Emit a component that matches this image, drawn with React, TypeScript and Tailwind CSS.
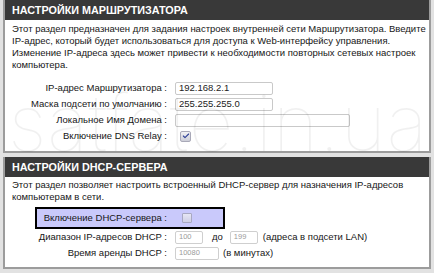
import { Check } from 'lucide-react';

function Header({ title }: { title: string }) {
  return (
    <div className="h-[20px] bg-[#393939] flex items-center pl-[7px]">
      <span className="text-white font-bold text-[10.8px]">{title}</span>
    </div>
  );
}

function TextInput({ value, width }: { value: string; width: string }) {
  return (
    <div className={`${width} h-[13px] bg-white border border-[#c9c9c9] rounded-[2px] flex items-center pl-[3px] text-[9.5px] text-[#222]`}>
      {value}
    </div>
  );
}

function SmallInput({ value, width }: { value: string; width: string }) {
  return (
    <div className={`${width} h-[13px] bg-white border border-[#cfcfcf] rounded-[2px] flex items-center pl-[3px] text-[7.5px] text-[#9a9a9a]`}>
      {value}
    </div>
  );
}

function Checkbox() {
  return (
    <div className="w-[11px] h-[11px] border border-[#a9a9b8] rounded-[2px] bg-gradient-to-b from-[#f2f2f4] to-[#cdced8] flex items-center justify-center">
      <Check size={8} strokeWidth={3.2} className="text-[#2d3f96]" />
    </div>
  );
}

function Row({ label, children }: { label: string; children: React.ReactNode }) {
  return (
    <div className="flex items-center h-[16px]">
      <div className="w-[162px] text-right whitespace-nowrap">{label}</div>
      <div className="ml-[8px] flex items-center">{children}</div>
    </div>
  );
}

export default function App() {
  return (
    <div className="relative w-[434px] h-[273px] bg-[#e2e2e2] px-[3px] overflow-hidden font-['Liberation_Sans',Arial,sans-serif] text-[9.5px] text-[#161616]">
      {/* router settings */}
      <div className="bg-white border-x-2 border-b-2 border-[#9c9c9c]">
        <Header title="НАСТРОЙКИ МАРШРУТИЗАТОРА" />
        <div className="pl-[7px] pt-[3px] leading-[12px] whitespace-nowrap">
          Этот раздел предназначен для задания настроек внутренней сети Маршрутизатора. Введите<br />
          IP-адрес, который будет использоваться для доступа к Web-интерфейсу управления.<br />
          Изменение IP-адреса здесь может привести к необходимости повторных сетевых настроек<br />
          компьютера.
        </div>
        <div className="pt-[9px] pb-[7px] flex flex-col">
          <Row label="IP-адрес Маршрутизатора :">
            <TextInput value="192.168.2.1" width="w-[98px]" />
          </Row>
          <Row label="Маска подсети по умолчанию :">
            <TextInput value="255.255.255.0" width="w-[98px]" />
          </Row>
          <Row label="Локальное Имя Домена :">
            <TextInput value="" width="w-[175px]" />
          </Row>
          <Row label="Включение DNS Relay :">
            <div className="ml-[5px]"><Checkbox /></div>
          </Row>
        </div>
      </div>

      {/* DHCP server */}
      <div className="mt-[4px] bg-white border-x-2 border-b-2 border-[#9c9c9c]">
        <Header title="НАСТРОЙКИ DHCP-СЕРВЕРА" />
        <div className="pl-[7px] pt-[2px] leading-[12px] whitespace-nowrap">
          Этот раздел позволяет настроить встроенный DHCP-сервер для назначения IP-адресов<br />
          компьютерам в сети.
        </div>
        <div className="mt-[4px] ml-[30px] w-[190px] h-[22px] border-2 border-black bg-[#c9c9fb] flex items-center">
          <div className="w-[130px] text-right whitespace-nowrap">Включение DHCP-сервера :</div>
          <div className="ml-[15px]">
            <div className="w-[10px] h-[10px] border border-[#a8a8c2] rounded-[1px] bg-gradient-to-b from-[#e6e6f4] to-[#cfcfe6]" />
          </div>
        </div>
        <div className="pb-[6px] flex flex-col">
          <Row label="Диапазон IP-адресов DHCP :">
            <SmallInput value="100" width="w-[28px]" />
            <span className="ml-[9px]">до</span>
            <div className="ml-[7px]"><SmallInput value="199" width="w-[28px]" /></div>
            <span className="ml-[5px]">(адреса в подсети LAN)</span>
          </Row>
          <Row label="Время аренды DHCP :">
            <SmallInput value="10080" width="w-[44px]" />
            <span className="ml-[4px]">(в минутах)</span>
          </Row>
        </div>
      </div>

      {/* watermark */}
      <div className="pointer-events-none absolute left-[8px] top-[84px] font-['Inter',sans-serif] font-thin text-[78px] tracking-[0.5px] leading-none text-black/[0.06] whitespace-nowrap">
        satfate.in.ua
      </div>
    </div>
  );
}
